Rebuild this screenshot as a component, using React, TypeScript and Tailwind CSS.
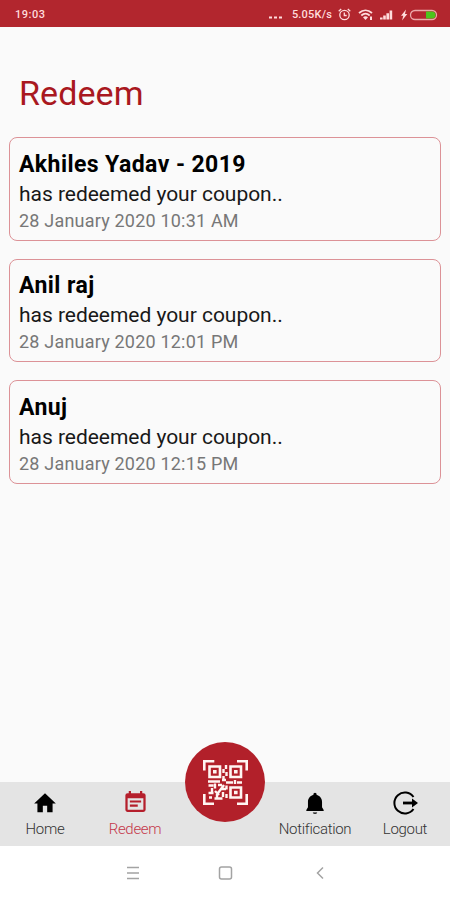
const redemptions = [
  { name: 'Akhiles Yadav - 2019', date: '28 January 2020 10:31 AM' },
  { name: 'Anil raj', date: '28 January 2020 12:01 PM' },
  { name: 'Anuj', date: '28 January 2020 12:15 PM' },
];

const StatusBar = () => (
  <header className="flex h-[27px] items-center bg-[#b2262e] pl-[15px] pr-[12px] pt-[2px] text-[11px] font-medium text-[#ffdcdc]">
    <span className="mt-[2px] tracking-[0.5px]">19:03</span>
    <div className="ml-auto flex items-center">
      <svg className="mt-[5px] mr-[10px] h-[3px] w-[13px]" viewBox="0 0 13 3" fill="currentColor">
        <path d="M0 .5h3v2H0zM5 .5h3v2H5zM10 .5h3v2h-3z" />
      </svg>
      <span className="mt-[2px] mr-[6px] tracking-[0.2px]">5.05K/s</span>
      <svg className="mr-[7px] h-[13px] w-[13px]" viewBox="0 0 13 13" fill="none" stroke="currentColor" strokeWidth="1.3">
        <circle cx="6.5" cy="7" r="4.7" />
        <path d="M6.3 4.5v3h2.4M.7 3.2 3.2 1M12.3 3.2 9.8 1" />
      </svg>
      <svg className="mr-[7px] h-[12px] w-[15px]" viewBox="0 0 15 12" fill="none" stroke="currentColor">
        <path d="M1 4c4-3.5 9-3.5 13 0" strokeWidth="1.8" />
        <path d="M3.3 6.5c2.500-2.200 5.900-2.200 8.400 0" strokeWidth="1.8" />
        <path d="M5 8.200c1.500-1.200 3.500-1.200 5 0L7.500 11z" fill="currentColor" stroke="none" />
        <path d="M13 7.500V11" strokeWidth="2" />
      </svg>
      <svg className="mr-[8px] h-[11px] w-[13px]" viewBox="0 0 13 11" fill="currentColor">
        <path d="M0 8.500h2.600v2H0zM3.200 6.500h2.600v4H3.200zM6.400 4.200H9v6.300H6.400zM9.600 1.500h2.600v9H9.600z" />
      </svg>
      <svg className="h-[12px] w-[37px]" viewBox="0 0 37 12" fill="none">
        <path d="M5 .5 0 6.800h2.300L1 11.500 6.300 5H4z" fill="currentColor" />
        <rect x="9.500" y="1.500" width="26" height="9" rx="4.500" stroke="#eba9a9" strokeWidth="1.300" />
        <path d="M25 2.500h6a3.500 3.500 0 0 1 0 7h-6z" fill="#4cc51c" />
      </svg>
    </div>
  </header>
);

const HomeIcon = () => (
  <svg className="h-[26px] w-[26px]" viewBox="0 0 24 24" fill="currentColor">
    <path d="M10 20.500v-6h4v6h5v-8h3L12 3 2 12.500h3v8z" />
  </svg>
);

const EventIcon = () => (
  <svg className="h-[25px] w-[27px]" viewBox="0 0 24 24" preserveAspectRatio="none" fill="currentColor">
    <path d="M17 10H7v2h10zM19 3h-1V1h-2v2H8V1H6v2H5a2 2 0 0 0-2 2v14c0 1.100.9 2 2 2h14a2 2 0 0 0 2-2V5a2 2 0 0 0-2-2m0 16H5V8h14zm-5-5H7v2h7z" />
  </svg>
);

const BellIcon = () => (
  <svg className="h-[26px] w-[26px]" viewBox="0 0 24 24" fill="currentColor">
    <path d="M12 22c1.100 0 2-.6 2-1.300h-4c0 .7.9 1.300 2 1.300m6.500-6v-5c0-3.100-1.900-5.600-5-6.300V4a1.500 1.500 0 0 0-3 0v.7c-3.100.7-5 3.200-5 6.300v5L4 18.500v.8h16v-.8z" />
  </svg>
);

const LogoutIcon = () => (
  <svg className="h-[26px] w-[26px]" viewBox="0 0 26 26" fill="none" stroke="currentColor" strokeWidth="2">
    <path d="M21.500 7a10.500 10.500 0 1 0 0 12" />
    <path d="M11 13h11" strokeWidth="2.800" />
    <path d="m20 8.500 6 4.500-6 4.500z" fill="currentColor" stroke="none" />
  </svg>
);

const ScanIcon = () => (
  <svg className="h-[45px] w-[45px]" viewBox="0 0 45 45" fill="none" stroke="#fff5f2" strokeWidth="2">
    <path d="M1.300 10.500V1.300h10M34 1.300h9.700v9.200M43.700 34v9.700H34M11 43.700H1.300V34" strokeWidth="2.600" />
    <path d="M6.500 6.500h10.500v10.500H6.500zM27.500 6.500H38v10.500H27.500zM27.500 27.500H38v10H27.500z" strokeWidth="2.600" />
    <path d="M10 10h3.600v3.600H10zM31 10h3.600v3.600H31zM31 30.700h3.600v3.600H31z" fill="#fff5f2" stroke="none" />
    <path d="M23 5v4M20.500 9v4M23.500 12v4M20.500 16v3.500M5 21.500h12M19 20h4M23 22.500h7M32 20v4M34 22.500h5" strokeWidth="2.400" />
    <path d="M5.500 25.500h5M12 23.500v5M15 25h4M9 28v4M5.500 33h5M12 31l4 4M21 25l-6 8M18 29h5M20 32v5M23.500 25.500v4M23.500 34v4M6 37.500h3M11.500 38.500h8M14 34v4" strokeWidth="2.400" />
  </svg>
);

interface NavItemProps {
  label: string;
  icon: React.ReactNode;
  active?: boolean;
}

const NavItem = ({ label, icon, active }: NavItemProps) => (
  <div className={`flex flex-1 flex-col items-center pt-[7px] ${active ? 'text-[#b51f2c]' : 'text-black'}`}>
    <div className="flex h-[27px] items-center justify-center">{icon}</div>
    <span
      className={`mt-[3px] text-[15px] leading-[20px] font-light tracking-[-0.3px] ${active ? 'text-[#c5374a]' : 'text-[#333]'}`}
    >
      {label}
    </span>
  </div>
);

export default function App() {
  return (
    <div className="flex h-[900px] w-[450px] flex-col bg-[#fafafa] font-[Roboto,sans-serif]">
      <StatusBar />
      <main className="flex-1 px-[9px]">
        <h1 className="mt-[44px] ml-[10px] text-[34px] leading-[44px] tracking-[0.1px] text-[#a91820]">Redeem</h1>
        <div className="mt-[22px] flex flex-col gap-[18px]">
          {redemptions.map((item) => (
            <div key={item.name} className="h-[103.6px] rounded-[8px] border border-[#dc9297] pt-[11.7px] pl-[9px]">
              <div className="text-[23px] leading-[30px] font-bold tracking-[0.42px] text-black">{item.name}</div>
              <div className="text-[21px] leading-[29px] tracking-[-0.03px] text-[#181818]">has redeemed your coupon..</div>
              <div className="text-[18px] leading-[24px] tracking-[0.2px] text-[#777]">{item.date}</div>
            </div>
          ))}
        </div>
      </main>
      <nav className="relative flex h-[64px] bg-[#e4e4e4]">
        <NavItem label="Home" icon={<HomeIcon />} />
        <NavItem label="Redeem" icon={<EventIcon />} active />
        <div className="flex-1" />
        <NavItem label="Notification" icon={<BellIcon />} />
        <NavItem label="Logout" icon={<LogoutIcon />} />
        <button className="absolute -top-[40px] left-[185px] flex h-[80px] w-[80px] items-center justify-center rounded-full bg-[#b2202a]">
          <ScanIcon />
        </button>
      </nav>
      <footer className="flex h-[54px] items-center justify-center bg-white pr-[4px]">
        <svg className="h-[14px] w-[206px]" viewBox="0 0 206 14" fill="none" stroke="#a3a3a3" strokeWidth="1.5">
          <path d="M7 1.500h12M7 7h12M7 12.500h12" />
          <rect x="99.500" y="1" width="12" height="12" rx="2" />
          <path d="m203 1.500-5.500 5.500 5.500 5.500" />
        </svg>
      </footer>
    </div>
  );
}
